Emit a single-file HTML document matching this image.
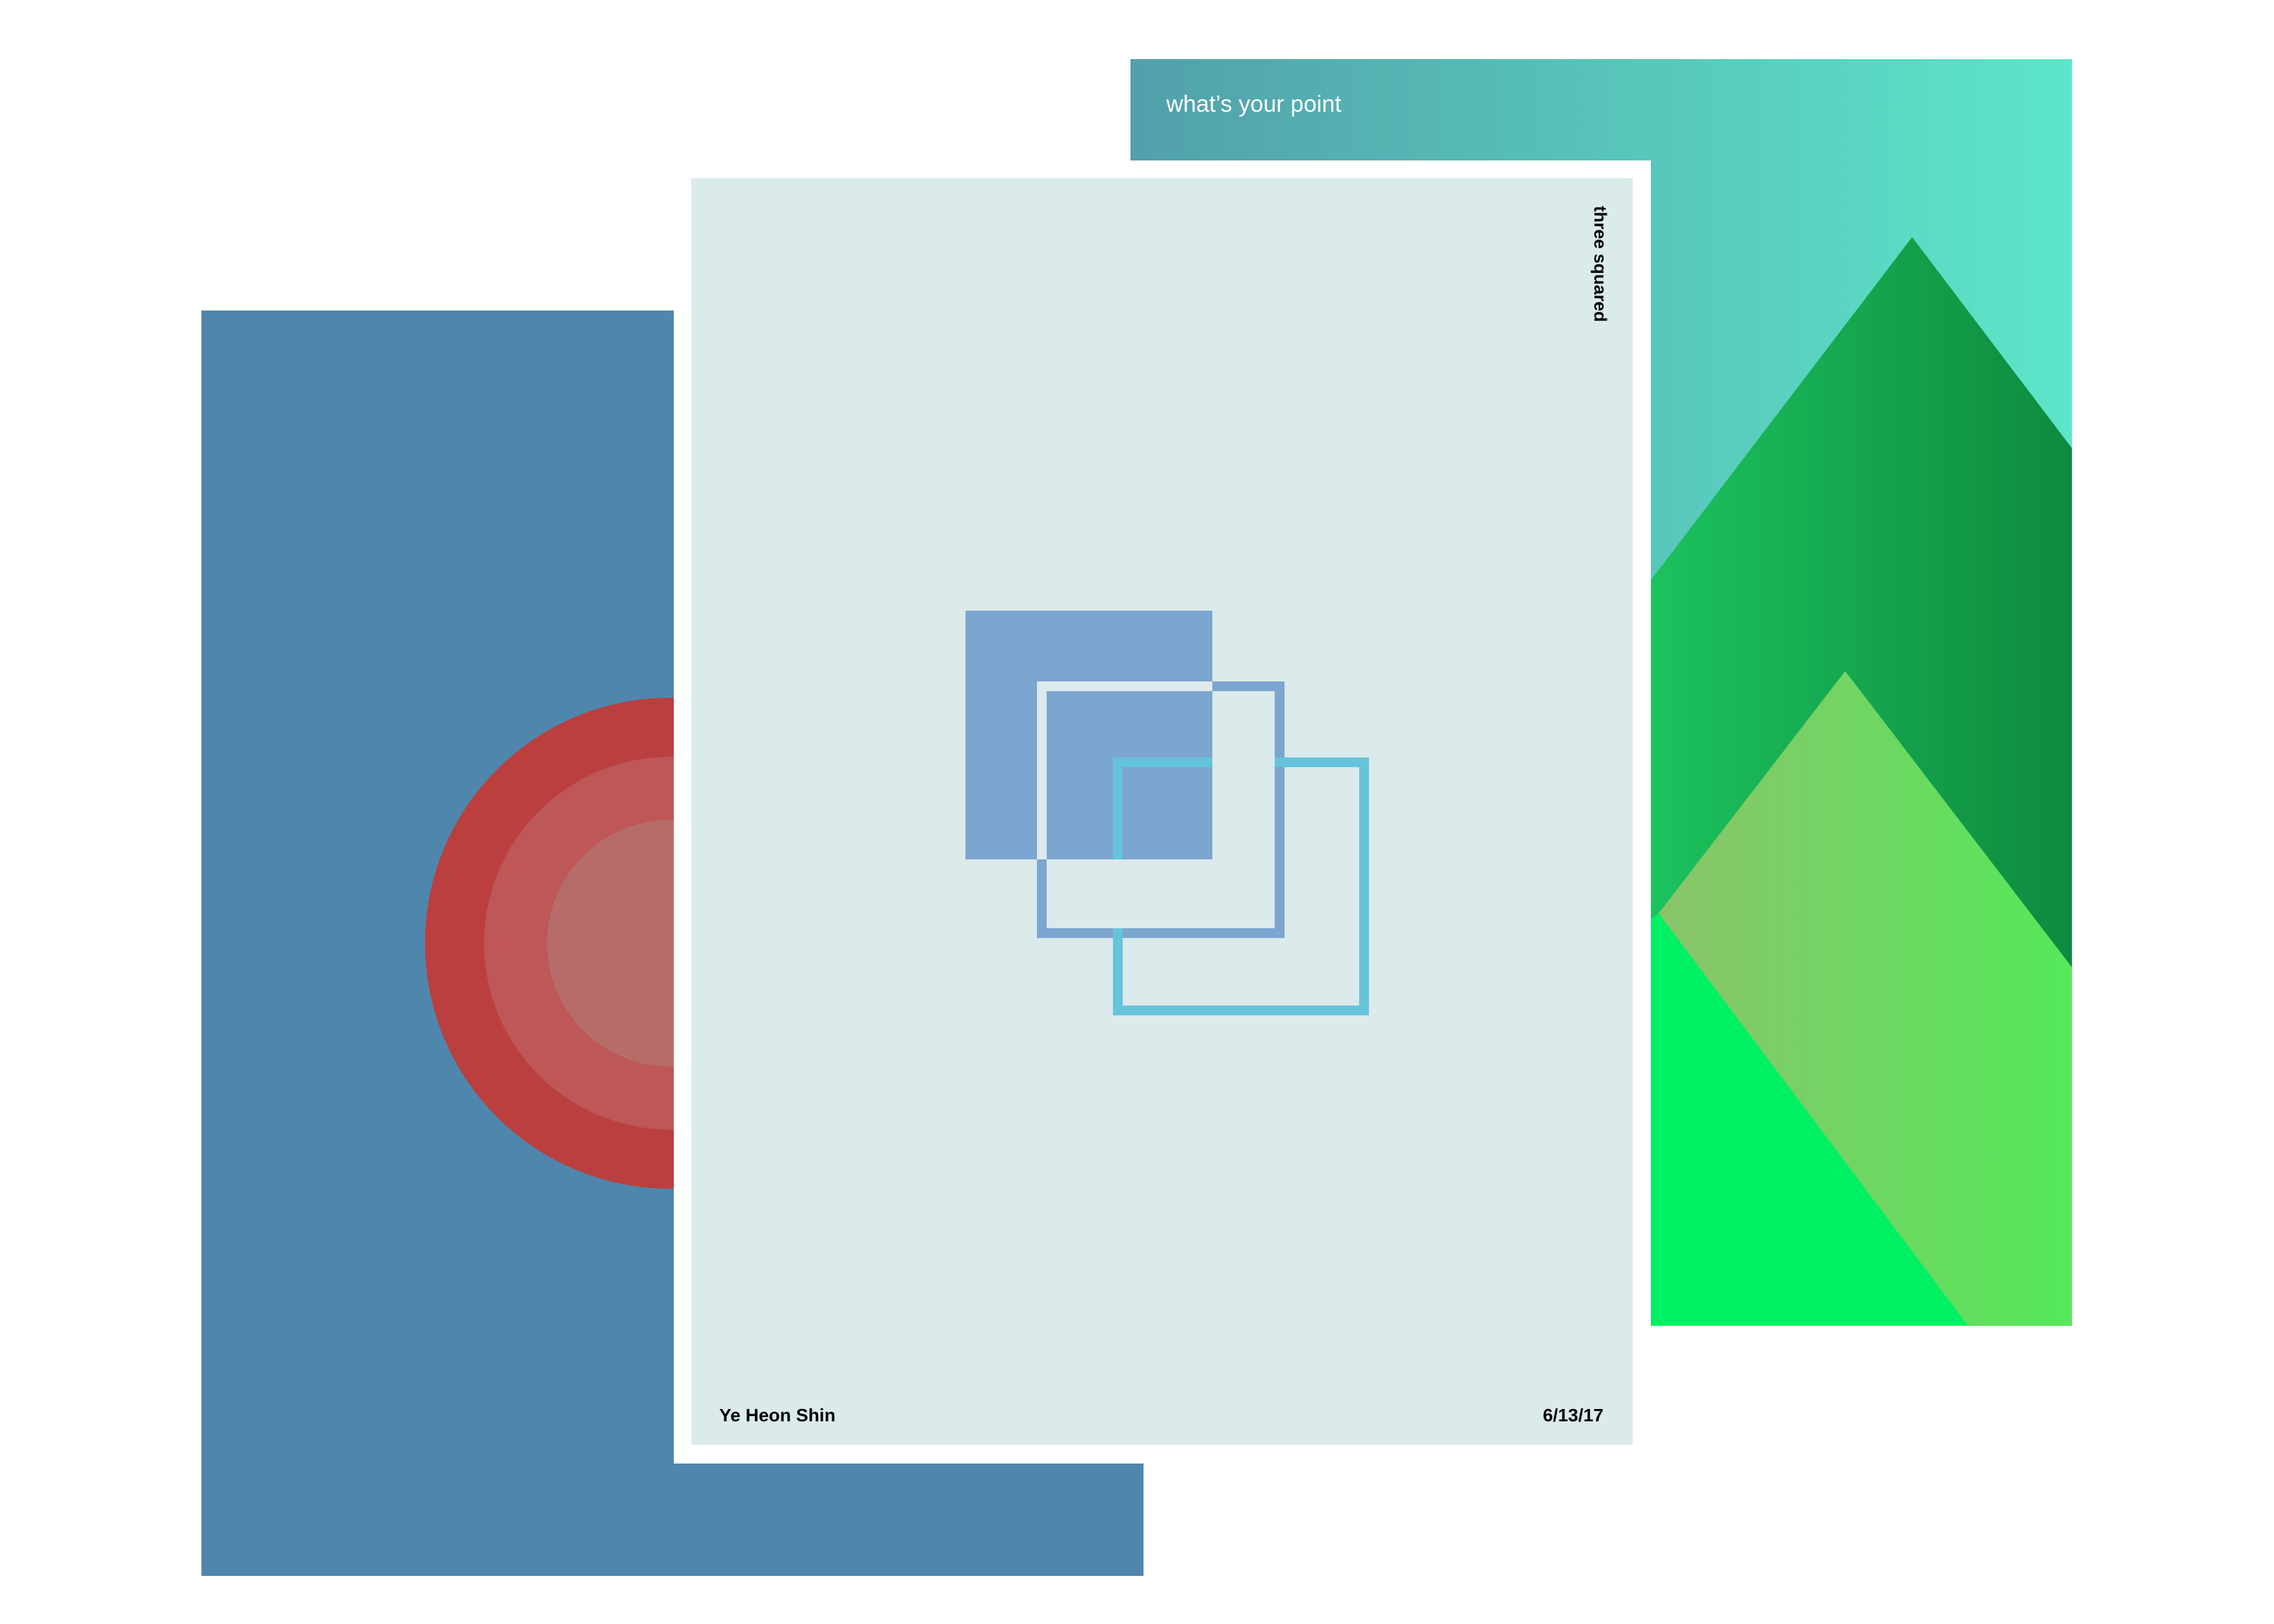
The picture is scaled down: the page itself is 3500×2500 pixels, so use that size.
<!DOCTYPE html>
<html><head><meta charset="utf-8"><style>
html,body{margin:0;padding:0;background:#fff;width:3500px;height:2500px;overflow:hidden}
svg{display:block}
text{font-family:"Liberation Sans",Arial,sans-serif}
</style></head><body>
<svg width="3500" height="2500" viewBox="0 0 3500 2500" xmlns="http://www.w3.org/2000/svg">
<defs>
<linearGradient id="teal" x1="0" x2="1" y1="0" y2="0"><stop offset="0" stop-color="#52a0aa"/><stop offset="1" stop-color="#5de6c9"/></linearGradient>
<linearGradient id="dark" gradientUnits="userSpaceOnUse" x1="2541" x2="3189" y1="0" y2="0"><stop offset="0" stop-color="#1cc25d"/><stop offset="1" stop-color="#0e8a3f"/></linearGradient>
<linearGradient id="light" gradientUnits="userSpaceOnUse" x1="2560" x2="3189" y1="0" y2="0"><stop offset="0" stop-color="#8ac46a"/><stop offset="1" stop-color="#55e85a"/></linearGradient>
<clipPath id="gp"><rect x="1740" y="91" width="1449" height="1950"/></clipPath>
<clipPath id="fsq"><rect x="1486" y="940" width="380" height="383"/></clipPath>
</defs>
<rect x="310" y="478" width="1450" height="1948" fill="#4f87ac"/>
<circle cx="1032" cy="1452" r="378" fill="#bb3f3f"/>
<circle cx="1032" cy="1452" r="287" fill="#be5757"/>
<circle cx="1032" cy="1452" r="190" fill="#b66d6a"/>
<g clip-path="url(#gp)">
<rect x="1740" y="91" width="1449" height="1950" fill="url(#teal)"/>
<polygon points="2943,365 3189,690 3189,2041 1667,2041" fill="url(#dark)"/>
<polygon points="2840,1033 3189,1489 3189,2041 2064,2041" fill="url(#light)"/>
<polygon points="2553,1406 3029,2041 1700,2041" fill="#00f064"/>
</g>
<text x="1795" y="172" font-size="36" fill="#fff">what’s your point</text>
<rect x="1037" y="247" width="1504" height="2006" fill="#fff"/>
<rect x="1064" y="274" width="1449" height="1950" fill="#dbeaea"/>
<rect x="1486" y="940" width="380" height="383" fill="#7ca5cf"/>
<rect x="1603.5" y="1056.5" width="366" height="380" fill="none" stroke="#7ca5cf" stroke-width="15"/>
<g clip-path="url(#fsq)"><rect x="1603.5" y="1056.5" width="366" height="380" fill="none" stroke="#dbeaea" stroke-width="15"/></g>
<rect x="1720.5" y="1173.5" width="379" height="382" fill="none" stroke="#66c3dc" stroke-width="15"/>
<rect x="1866" y="1064" width="96" height="365" fill="#dbeaea"/>
<rect x="1611" y="1323" width="255" height="106" fill="#dbeaea"/>
<rect x="1962" y="1181" width="15" height="10" fill="#7ca5cf"/>
<text transform="translate(2454,317) rotate(90)" font-size="27" font-weight="bold" fill="#000">three squared</text>
<text x="1107" y="2188" font-size="28" font-weight="bold" fill="#000">Ye Heon Shin</text>
<text x="2468" y="2188" font-size="28" font-weight="bold" fill="#000" text-anchor="end">6/13/17</text>
</svg>
</body></html>
